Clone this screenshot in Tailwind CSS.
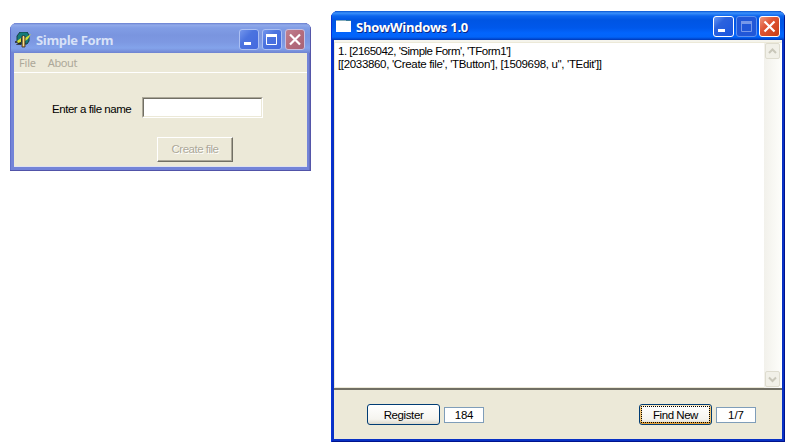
<!DOCTYPE html>
<html lang="en"><head><meta charset="utf-8"><title>ShowWindows</title>
<script src="https://cdn.jsdelivr.net/npm/@tailwindcss/browser@4"></script></head>
<body class="relative h-[447px] w-[790px] overflow-hidden bg-white font-['Liberation_Sans',sans-serif] text-[11.5px] leading-[13px] text-black">

<!-- Simple Form window (inactive) -->
<section class="absolute left-[10px] top-[23px] flex h-[148px] w-[301px] flex-col overflow-hidden rounded-t-[7px] border-b border-[#5154a8] bg-[#7384d8] shadow-[inset_1px_0_#6170cb,inset_-1px_0_#5556a8,inset_-2px_0_#6570c0]">
  <header class="flex h-[30px] shrink-0 items-center bg-[linear-gradient(#697fd0_0px,#91aaea_2px,#819de5_5px,#7a95df_12px,#7d98e2_19px,#83a3eb_25px,#7992dc_28px,#6e82d1_30px)] pl-[5px] pr-[6px] pt-[3px] shadow-[inset_1px_0_#6170cb,inset_-1px_0_#5556a8]">
    <svg class="h-4 w-[17px] shrink-0" viewBox="0 0 17 16">
      <path d="M5 0H12L14 3V9L12 12H5L2 9V4Z" fill="#157b78" stroke="#173f42"/>
      <path d="M0 10H4L6 8V10L3 12H6" stroke="#24251d" stroke-width="1.4" fill="none"/>
      <path d="M2 9L6 6V10L3 11ZM10 6L13 4L16 2L13 7L10 9Z" fill="#d0df38"/>
      <path d="M7 4H10V15H7Z" fill="#d7a950" stroke="#3b2a20" stroke-width=".8"/>
      <path d="M8.500 4V14" stroke="#f0df92"/>
    </svg>
    <h1 class="ml-[4px] grow whitespace-nowrap font-['Open_Sans',sans-serif] text-[13px] font-bold leading-4 tracking-[-0.35px] text-[#d8e2f8]">Simple Form</h1>
    <div class="flex gap-[3px]">
      <svg class="h-[21px] w-5" viewBox="0 0 20 21"><defs><linearGradient id="ia" x1="0" y1="0" x2="1" y2="1"><stop stop-color="#7698ed"/><stop offset=".4" stop-color="#4b73df"/><stop offset="1" stop-color="#4469df"/></linearGradient><linearGradient id="ir" x1="0" y1="0" x2="1" y2="1"><stop stop-color="#c18290"/><stop offset=".5" stop-color="#b56c7c"/><stop offset="1" stop-color="#a66175"/></linearGradient></defs><rect x=".5" y=".5" width="19" height="20" rx="2.5" fill="url(#ia)" stroke="#acc0f3"/><path d="M5 13H12V16H5Z" fill="#fff"/></svg>
      <svg class="h-[21px] w-5" viewBox="0 0 20 21"><rect x=".5" y=".5" width="19" height="20" rx="2.5" fill="url(#ia)" stroke="#acc0f3"/><path d="M4.500 5V15.500H14.500V5" fill="none" stroke="#fff"/><path d="M4 5H15V8H4Z" fill="#fff"/></svg>
      <svg class="h-[21px] w-5" viewBox="0 0 20 21"><rect x=".5" y=".5" width="19" height="20" rx="2.5" fill="url(#ir)" stroke="#c7bfe0"/><path d="M5 5.500L15 15.500M15 5.500L5 15.500" stroke="#fff" stroke-width="2.2"/></svg>
    </div>
  </header>
  <div class="mx-[4px] flex h-[114px] flex-col border-b border-[#dfe2f0] bg-[#ece9d8]">
    <nav class="flex h-[20px] shrink-0 items-center gap-[12px] border-b border-white pl-[5px] font-['Noto_Sans',sans-serif] text-[11px] text-[#aca899]"><span class="-mt-px tracking-[-0.2px]">File</span><span class="-mt-px tracking-[-0.4px]">About</span></nav>
    <div class="mt-[24px] flex h-[21px] items-center pl-[38px]">
      <label class="w-[90px] shrink-0 whitespace-nowrap pt-[3px] tracking-[-0.45px]">Enter a file name</label>
      <div class="h-[21px] w-[121px] border border-b-white border-l-[#aca899] border-r-white border-t-[#aca899]"><div class="h-full border border-b-[#ece9d8] border-l-[#716f64] border-r-[#ece9d8] border-t-[#716f64] bg-white"></div></div>
    </div>
    <button class="ml-[143px] mt-[19px] h-[25px] w-[76px] whitespace-nowrap border border-b-[#716f64] border-l-white border-r-[#716f64] border-t-white tracking-[-0.5px] text-[#aca899] shadow-[inset_-1px_-1px_#aca899] [text-shadow:1px_1px_white]">Create file</button>
  </div>
</section>

<!-- ShowWindows window (active) -->
<section class="absolute left-[331px] top-[11px] flex h-[431px] w-[454px] flex-col overflow-hidden rounded-t-[7px] bg-[#0831c4] shadow-[inset_1px_0_#0831d9,inset_-1px_0_#00138c,inset_0_-1px_#00138c]">
  <header class="flex h-[29px] shrink-0 items-center bg-[linear-gradient(#0753d0_0px,#3b91fb_2px,#0c65ed_5px,#0055e3_9px,#0058eb_17px,#0265fd_22px,#0264f9_26px,#0047cf_28px,#0038b5_29px)] pl-[5px] pr-[5px] pt-[3px] shadow-[inset_1px_0_#0831d9,inset_-1px_0_#00138c]">
    <svg class="-mt-px h-[13px] w-[15px] shrink-0" viewBox="0 0 15 13"><rect width="15" height="12" fill="#fff"/><path d="M0 .5H15" stroke="#86adbd"/><path d="M10 .5H15" stroke="#387b9a"/></svg>
    <h1 class="ml-[5px] grow whitespace-nowrap font-['Open_Sans',sans-serif] text-[13px] font-bold leading-4 tracking-[-0.25px] text-white [text-shadow:1px_1px_#0b2a87]">ShowWindows 1.0</h1>
    <div class="-mt-px flex gap-[2px]">
      <svg class="h-[21px] w-[21px]" viewBox="0 0 21 21"><defs><linearGradient id="aa" x1="0" y1="0" x2="1" y2="1"><stop stop-color="#6b9bf5"/><stop offset=".35" stop-color="#2b62de"/><stop offset="1" stop-color="#1855df"/></linearGradient><linearGradient id="ar" x1="0" y1="0" x2="1" y2="1"><stop stop-color="#ef9b82"/><stop offset=".4" stop-color="#df5635"/><stop offset="1" stop-color="#c93c12"/></linearGradient></defs><rect x=".5" y=".5" width="20" height="20" rx="2.5" fill="url(#aa)" stroke="#fff"/><path d="M5 13H12V16H5Z" fill="#fff"/></svg>
      <svg class="h-[21px] w-[21px]" viewBox="0 0 21 21"><rect x=".5" y=".5" width="20" height="20" rx="2.5" fill="#2157d8" stroke="#5d91ef"/><path d="M5.500 5.500H15.500V15.500H5.500Z" fill="none" stroke="#7798e9"/><path d="M5 5H16V8H5Z" fill="#7798e9"/></svg>
      <svg class="h-[21px] w-[21px]" viewBox="0 0 21 21"><rect x=".5" y=".5" width="20" height="20" rx="2.5" fill="url(#ar)" stroke="#fff"/><path d="M5.500 5.500L15.500 15.500M15.500 5.500L5.500 15.500" stroke="#fff" stroke-width="2.2"/></svg>
    </div>
  </header>
  <main class="mx-[3px] flex h-[399px] flex-col bg-[#ece9d8]">
    <div class="flex h-[350px] shrink-0 border-b-2 border-[#716f64] border-t-2 border-t-[#f5f4ec] bg-white">
      <div class="flex grow border border-r-0 border-[#ece9d8] pl-[3px] pt-[2px]">
        <div class="whitespace-nowrap"><p class="tracking-[-0.5px]">1. [2165042, 'Simple Form', 'TForm1']</p><p class="tracking-[-0.33px]">[[2033860, 'Create file', 'TButton'], [1509698, u'', 'TEdit']]</p></div>
      </div>
      <div class="flex w-[18px] flex-col justify-between border-r border-t border-r-white border-t-[#ece9d8] bg-[linear-gradient(90deg,#f2f1eb,#fdfdfa)]">
        <svg class="h-[17px] w-[17px]" viewBox="0 0 17 17"><rect x="1.500" y=".5" width="14" height="15" rx="1.5" fill="#f1f0e8" stroke="#dedccf"/><path d="M5 10L8.500 6.500L12 10" fill="none" stroke="#c9c7ba" stroke-width="2"/></svg>
        <svg class="h-[17px] w-[17px]" viewBox="0 0 17 17"><rect x="1.500" y=".5" width="14" height="15" rx="1.5" fill="#f1f0e8" stroke="#dedccf"/><path d="M5 6.500L8.500 10L12 6.500" fill="none" stroke="#c9c7ba" stroke-width="2"/></svg>
      </div>
    </div>
    <footer class="flex h-[49px] items-center pl-[33px]">
      <button class="h-[21px] w-[73px] rounded-[3px] border border-[#003c74] bg-[linear-gradient(#fff,#f5f4ef_75%,#dcd8cb)] pt-px tracking-[-0.4px]">Register</button>
      <div class="ml-[4px] h-[16px] w-[40px] border border-[#7f9db9] bg-white text-center leading-[15px] tracking-[-0.2px]">184</div>
      <button class="ml-[155px] h-[21px] w-[73px] rounded-[3px] border border-[#003c74] bg-[linear-gradient(#fff,#f5f4ef_75%,#dcd8cb)] p-px tracking-[-0.45px] shadow-[inset_0_1px_#fce6b8,inset_0_-2px_#e5a33c,inset_2px_0_#f3c778,inset_-2px_0_#f3c778]"><span class="block h-full border border-dotted border-black leading-[16px]">Find New</span></button>
      <div class="ml-[4px] h-[16px] w-[40px] border border-[#7f9db9] bg-white text-center leading-[15px]">1/7</div>
    </footer>
  </main>
</section>
</body></html>
